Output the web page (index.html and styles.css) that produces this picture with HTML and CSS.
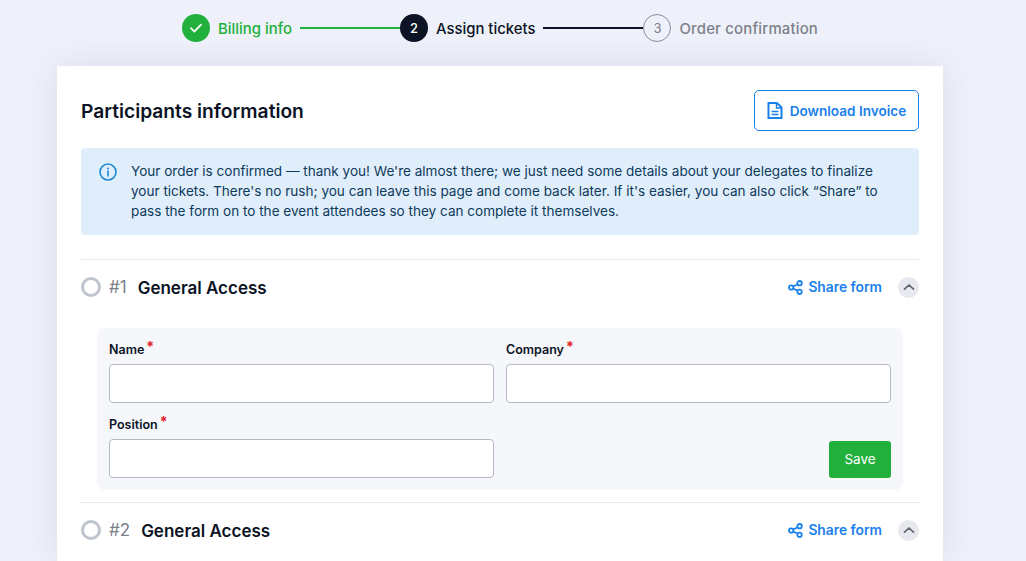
FILE: index.html
```html
<!DOCTYPE html>
<html lang="en">
<head>
<meta charset="utf-8">
<title>Participants information</title>
<link rel="stylesheet" href="styles.css">
</head>
<body>
<nav class="stepper">
  <div class="step done">
    <span class="bullet"><svg width="14" height="12" viewBox="0 0 14 12"><path d="M2 6.2 5.4 9.6 12 2.6" fill="none" stroke="#fff" stroke-width="1.8" stroke-linecap="round" stroke-linejoin="round"/></svg></span>
    <span class="step-label">Billing info</span>
    <span class="line"></span>
  </div>
  <div class="step current">
    <span class="bullet">2</span>
    <span class="step-label">Assign tickets</span>
    <span class="line"></span>
  </div>
  <div class="step todo">
    <span class="bullet">3</span>
    <span class="step-label">Order confirmation</span>
  </div>
</nav>
<main class="card">
  <header class="card-head">
    <h1>Participants information</h1>
    <a class="download">
      <svg width="16" height="17" viewBox="0 0 16 17"><path d="M1.5 1H10L14.5 5.5V16H1.5Z" fill="none" stroke="#1a80ec" stroke-width="2" stroke-linejoin="miter"/><path d="M9.5 1V6H14.5" fill="none" stroke="#1a80ec" stroke-width="1.4"/><path d="M4.5 9.5H11.5M4.5 12.5H11.5" stroke="#1a80ec" stroke-width="1.5"/></svg>
      Download Invoice
    </a>
  </header>
  <div class="notice">
    <svg class="notice-icon" width="18" height="18" viewBox="0 0 18 18"><circle cx="9" cy="9" r="8" fill="none" stroke="#1f8ad8" stroke-width="1.6"/><circle cx="9" cy="5.4" r="1" fill="#1f8ad8"/><path d="M9 8V13" stroke="#1f8ad8" stroke-width="1.6" stroke-linecap="round"/></svg>
    <p>Your order is confirmed — thank you! We're almost there; we just need some details about your delegates to finalize your tickets. There's no rush; you can leave this page and come back later. If it's easier, you can also click “Share” to pass the form on to the event attendees so they can complete it themselves.</p>
  </div>
  <section class="ticket">
    <div class="ticket-head">
      <span class="ring"></span>
      <span class="num">#1</span>
      <h2>General Access</h2>
      <a class="share">
        <svg width="15" height="15" viewBox="0 0 15 15"><g fill="none" stroke="#1a80ec" stroke-width="1.8"><circle cx="3.2" cy="7.5" r="2.2"/><circle cx="11.6" cy="3.2" r="2.2"/><circle cx="11.6" cy="11.8" r="2.2"/><path d="M5.2 6.5 9.6 4.2M5.2 8.5 9.6 10.8"/></g></svg>
        Share form
      </a>
      <span class="toggle"><svg width="12" height="8" viewBox="0 0 12 8"><path d="M1.5 6.2 6 2 10.5 6.2" fill="none" stroke="#5f6470" stroke-width="1.7" stroke-linecap="round" stroke-linejoin="round"/></svg></span>
    </div>
    <form class="panel">
      <label class="field"><span class="field-label">Name<span class="req">*</span></span><input type="text"></label>
      <label class="field"><span class="field-label">Company<span class="req">*</span></span><input type="text"></label>
      <label class="field"><span class="field-label">Position<span class="req">*</span></span><input type="text"></label>
      <div class="actions"><button type="button">Save</button></div>
    </form>
  </section>
  <section class="ticket second">
    <div class="ticket-head">
      <span class="ring"></span>
      <span class="num">#2</span>
      <h2>General Access</h2>
      <a class="share">
        <svg width="15" height="15" viewBox="0 0 15 15"><g fill="none" stroke="#1a80ec" stroke-width="1.8"><circle cx="3.2" cy="7.5" r="2.2"/><circle cx="11.6" cy="3.2" r="2.2"/><circle cx="11.6" cy="11.8" r="2.2"/><path d="M5.2 6.5 9.6 4.2M5.2 8.5 9.6 10.8"/></g></svg>
        Share form
      </a>
      <span class="toggle"><svg width="12" height="8" viewBox="0 0 12 8"><path d="M1.5 6.2 6 2 10.5 6.2" fill="none" stroke="#5f6470" stroke-width="1.7" stroke-linecap="round" stroke-linejoin="round"/></svg></span>
    </div>
  </section>
</main>
</body>
</html>
```
FILE: styles.css
```css
* { box-sizing: border-box; }
html, body { height: 100%; }
body {
  margin: 0;
  height: 561px;
  overflow: hidden;
  background: #eef1f9;
  font-family: "Inter", "Liberation Sans", sans-serif;
  color: #0b1324;
}
.stepper {
  height: 66px;
  padding: 0 0 10px 182px;
  display: flex;
  align-items: center;
}
.step { display: flex; align-items: center; }
.bullet {
  width: 28px;
  height: 28px;
  border-radius: 50%;
  display: flex;
  align-items: center;
  justify-content: center;
  font-size: 13px;
  font-weight: 500;
}
.step-label { margin-left: 8px; padding-top: 1px; font-size: 14.9px; font-weight: 500; white-space: nowrap; }
.line { width: 100px; height: 2px; margin-left: 8px; }
.done .bullet { background: #22b03c; }
.done .step-label { color: #22b03c; }
.done .line { background: #22b03c; }
.current .bullet { background: #0b1324; color: #fff; }
.current .line { background: #0b1324; }
.todo .bullet { border: 1px solid #8b8f99; color: #7c808b; font-weight: 400; }
.todo .step-label { color: #7c808b; letter-spacing: 0.2px; }
.card {
  width: 886px;
  margin-left: 57px;
  height: 495px;
  background: #fff;
  padding: 24px 24px 0;
  box-shadow: 0 0 30px rgba(60, 70, 110, 0.11);
}
.card-head {
  display: flex;
  align-items: center;
  justify-content: space-between;
  height: 41px;
}
h1 { margin: 0; padding-top: 1px; font-size: 19.2px; font-weight: 600; }
.download {
  width: 165px;
  height: 41px;
  border: 1px solid #1a80ec;
  border-radius: 5px;
  display: flex;
  align-items: center;
  justify-content: center;
  gap: 7px;
  color: #1a80ec;
  font-size: 13.6px;
  font-weight: 600;
}
.notice {
  margin-top: 17px;
  height: 87px;
  background: #e0eefb;
  border-radius: 4px;
  padding: 13px 18px;
  display: flex;
  gap: 14px;
}
.notice-icon { flex: none; margin-top: 2px; }
.notice p {
  margin: 0;
  max-width: 760px;
  font-size: 13.55px;
  line-height: 20px;
  color: #0e3a5c;
  font-weight: 400;
}
.ticket { margin-top: 24px; border-top: 1px solid #e8e9ee; }
.ticket.second { margin-top: 12px; }
.ticket-head {
  height: 54px;
  display: flex;
  align-items: center;
}
.ring {
  width: 20px;
  height: 20px;
  border: 3px solid #bfc4ce;
  border-radius: 50%;
  margin-right: 8px;
}
.num { font-size: 17px; color: #7c808b; margin-right: 11px; }
h2 { margin: 0; padding-top: 1px; font-size: 17px; font-weight: 600; flex: 1; }
.share {
  display: flex;
  align-items: center;
  gap: 5px;
  color: #1a80ec;
  font-size: 13.8px;
  font-weight: 600;
}
.toggle {
  width: 21px;
  height: 21px;
  margin-left: 16px;
  border-radius: 50%;
  background: #e8e9ee;
  display: flex;
  align-items: center;
  justify-content: center;
}
.panel {
  margin: 14px 16px 0;
  height: 162px;
  background: #f6f7fb;
  border-radius: 8px;
  padding: 10px 12px 12px;
  display: grid;
  grid-template-columns: 385px 385px;
  grid-template-rows: 65px 1fr;
  column-gap: 12px;
  row-gap: 11px;
}
.field { display: flex; flex-direction: column; justify-content: flex-end; }
.field-label {
  font-size: 12.5px;
  font-weight: 600;
  margin-bottom: 6px;
  line-height: 16px;
}
.req {
  color: #e0202a;
  font-size: 14px;
  font-weight: 700;
  line-height: 0;
  margin-left: 2px;
  vertical-align: 2px;
}
input {
  width: 100%;
  height: 39px;
  border: 1px solid #b5b9c6;
  border-radius: 4px;
  background: #fff;
}
.actions { display: flex; justify-content: flex-end; align-items: flex-end; }
button {
  width: 62px;
  height: 37px;
  padding: 0 0 2px;
  background: #22b03c;
  color: #fff;
  border: 0;
  border-radius: 3px;
  font-family: inherit;
  font-size: 13.5px;
  font-weight: 400;
}
```
